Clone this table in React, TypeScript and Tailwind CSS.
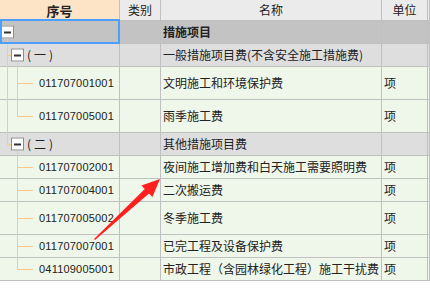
import React from "react";

type Row = {
  kind: "root" | "group" | "leaf";
  code?: string;
  name: string;
  unit?: string;
  tall?: boolean;
  outer?: "full" | "top" | "down";
  inner?: "full" | "top" | "down";
};

const rows: Row[] = [
  { kind: "root", name: "措施项目", outer: "down" },
  { kind: "group", code: "一", name: "一般措施项目费(不含安全施工措施费)", outer: "full", inner: "down" },
  { kind: "leaf", code: "011707001001", name: "文明施工和环境保护费", unit: "项", tall: true, outer: "full", inner: "full" },
  { kind: "leaf", code: "011707005001", name: "雨季施工费", unit: "项", tall: true, outer: "full", inner: "top" },
  { kind: "group", code: "二", name: "其他措施项目费", outer: "top", inner: "down" },
  { kind: "leaf", code: "011707002001", name: "夜间施工增加费和白天施工需要照明费", unit: "项", inner: "full" },
  { kind: "leaf", code: "011707004001", name: "二次搬运费", unit: "项", inner: "full" },
  { kind: "leaf", code: "011707005002", name: "冬季施工费", unit: "项", tall: true, inner: "full" },
  { kind: "leaf", code: "011707007001", name: "已完工程及设备保护费", unit: "项", inner: "full" },
  { kind: "leaf", code: "041109005001", name: "市政工程（含园林绿化工程）施工干扰费", unit: "项", inner: "top" },
];

const cols = "grid grid-cols-[120px_41px_221px_46px_1fr]";
const cell = "border-r border-b border-[#c0c0c0] flex items-center";
const line = "absolute bg-[#fcc983]";

function Toggle({ left }: { left: string }) {
  return (
    <span
      className={`absolute ${left} top-1/2 -translate-y-1/2 w-[13px] h-[13px] border border-[#8c8c8c] bg-white flex items-center justify-center z-[1]`}
    >
      <span className="w-[7px] h-[2px] bg-[#333]" />
    </span>
  );
}

function VLine({ x, mode }: { x: string; mode?: "full" | "top" | "down" }) {
  if (!mode) return null;
  if (mode === "full") return <span className={`${line} ${x} w-px top-0 -bottom-px`} />;
  if (mode === "top") return <span className={`${line} ${x} w-px top-0 h-1/2`} />;
  return <span className={`${line} ${x} w-px top-1/2 -bottom-px`} />;
}

function TreeCell({ row }: { row: Row }) {
  return (
    <div className={`${cell} relative`}>
      <VLine x="left-[7px]" mode={row.outer} />
      <VLine x="left-[17px]" mode={row.inner} />
      {row.kind === "root" && (
        <>
          <Toggle left="left-[1px]" />
          <span className="absolute -top-[2px] left-0 -right-px -bottom-px border-2 border-[#4d9fff] z-10" />
        </>
      )}
      {row.kind === "group" && (
        <>
          <span className={`${line} left-[7px] w-[5px] h-px top-1/2`} />
          <Toggle left="left-[11px]" />
          <span className="ml-[27px] text-[12px] text-[#222]">
            (<span className="mx-[3px]">{row.code}</span>)
          </span>
        </>
      )}
      {row.kind === "leaf" && (
        <>
          <span className={`${line} left-[17px] w-[16px] h-px top-1/2`} />
          <span className="ml-[39px] text-[11px] text-[#222] font-['Liberation_Sans',sans-serif] tracking-[0.2px]">
            {row.code}
          </span>
        </>
      )}
    </div>
  );
}

export default function App() {
  return (
    <div className="relative w-[430px] h-[290px] bg-white overflow-hidden font-['Noto_Sans_CJK_SC','Noto_Sans',sans-serif] text-[12px] text-[#222] leading-none">
      {/* column headers */}
      <div className={`${cols} h-[21px]`}>
        <div className={`${cell} justify-center bg-[#fde4c6] font-bold text-[13px]`}>序号</div>
        <div className={`${cell} justify-center bg-[#ebebeb]`}>类别</div>
        <div className={`${cell} justify-center bg-[#ebebeb]`}>名称</div>
        <div className={`${cell} justify-center bg-[#ebebeb]`}>单位</div>
        <div className={`${cell} bg-[#ebebeb]`} />
      </div>

      {rows.map((row, i) => {
        const bg =
          row.kind === "root" ? "bg-[#c3c3c3]" : row.kind === "group" ? "bg-[#dedede]" : "bg-[#eef7e9]";
        const h = row.tall ? "h-[33px]" : "h-[23px]";
        return (
          <div key={i} className={`${cols} ${h} ${bg}`}>
            <TreeCell row={row} />
            <div className={cell} />
            <div className={`${cell} pl-[2px] ${row.kind === "root" ? "font-bold" : ""}`}>{row.name}</div>
            <div className={`${cell} pl-[2px]`}>{row.unit}</div>
            <div className={cell} />
          </div>
        );
      })}

      {/* red pointer arrow */}
      <svg className="absolute inset-0 pointer-events-none z-20" width="430" height="290" viewBox="0 0 430 290">
        <polygon
          points="95,240 149,193.5 152.4,197.1 160,179 141.4,185.5 144.8,189.1 94,239"
          fill="#ff1f1f"
        />
      </svg>
    </div>
  );
}
